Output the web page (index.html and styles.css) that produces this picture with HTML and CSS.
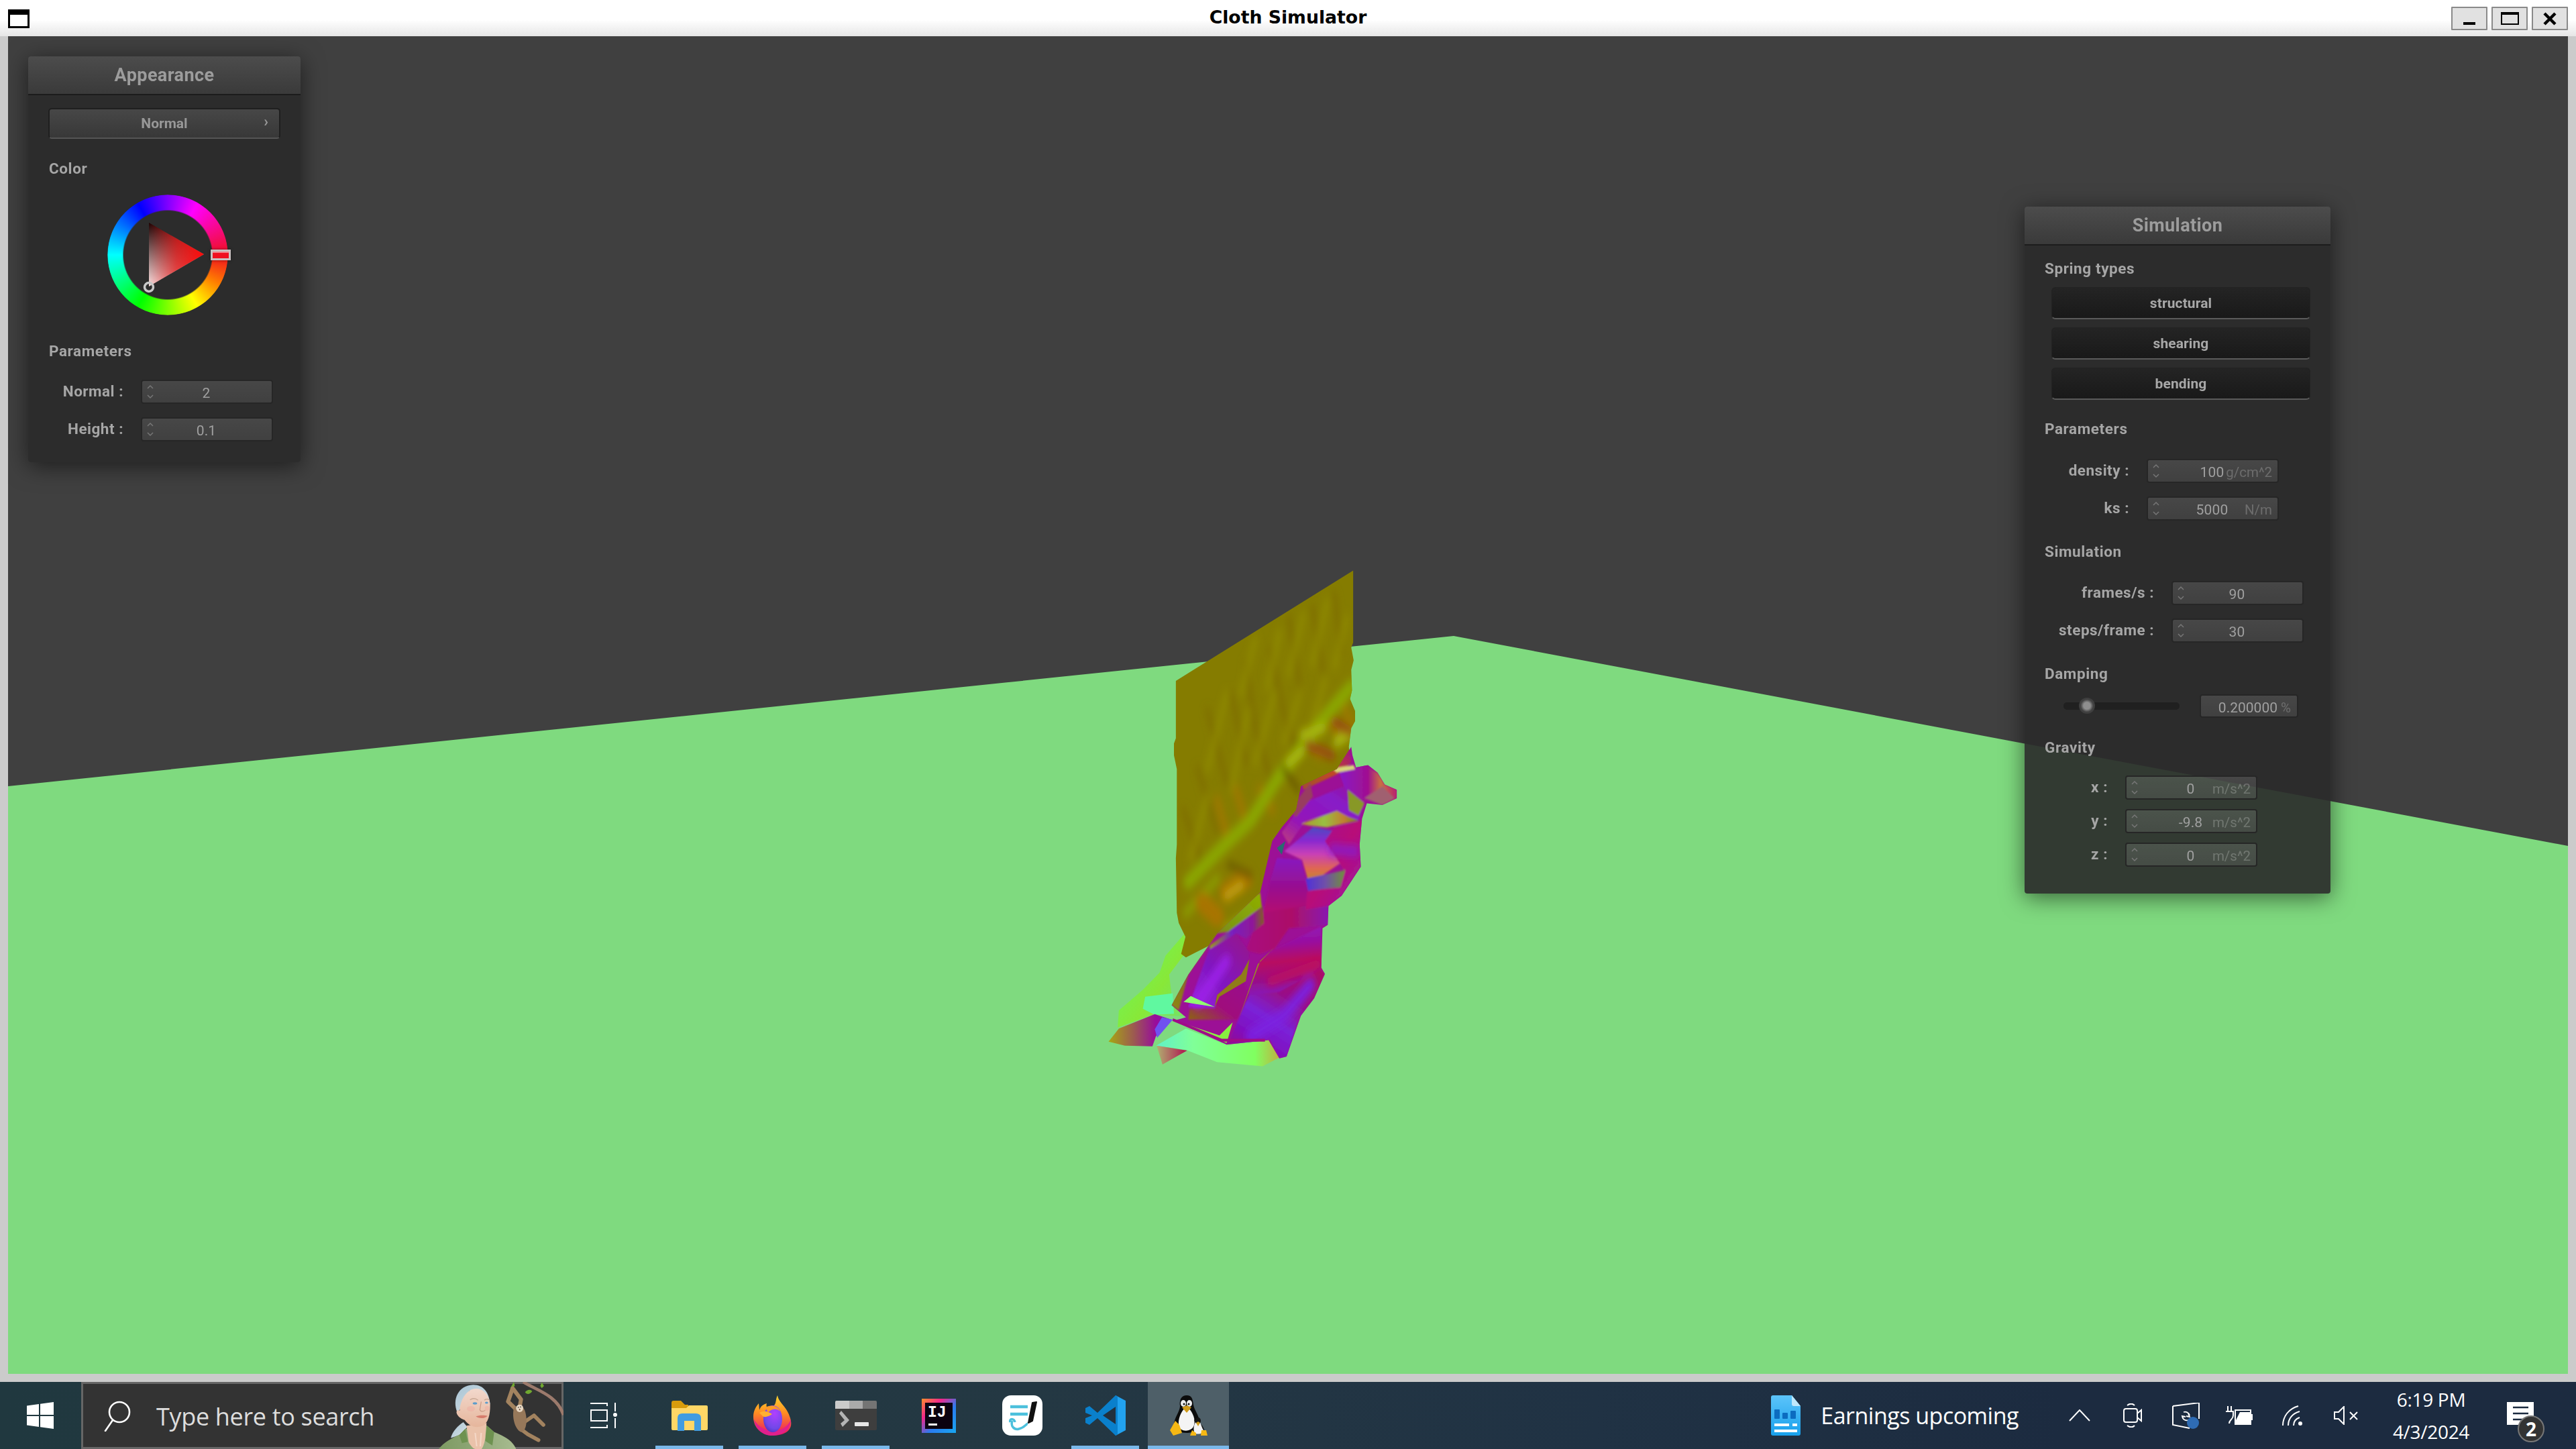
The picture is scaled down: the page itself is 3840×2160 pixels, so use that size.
FILE: index.html
```html
<!DOCTYPE html>
<html lang="en">
<head>
<meta charset="utf-8">
<title>Cloth Simulator</title>
<link rel="stylesheet" href="styles.css">
</head>
<body>
<div class="screen">
  <header class="titlebar">
    <svg class="win-icon" viewBox="0 0 32 28"><rect x="1.5" y="1.5" width="29" height="25" fill="#fff" stroke="#000" stroke-width="3"/><rect x="0" y="0" width="32" height="8" fill="#000"/></svg>
    <div class="win-title">Cloth Simulator</div>
    <div class="win-buttons">
      <div class="win-btn"><svg viewBox="0 0 54 35" width="54" height="35"><rect x="18" y="23" width="18" height="4" fill="#000"/></svg></div>
      <div class="win-btn"><svg viewBox="0 0 54 35" width="54" height="35"><rect x="15" y="9" width="25" height="17" fill="none" stroke="#000" stroke-width="2"/><rect x="14" y="8" width="27" height="4" fill="#000"/></svg></div>
      <div class="win-btn"><svg viewBox="0 0 54 35" width="54" height="35"><path d="M19 10 L35 26 M35 10 L19 26" stroke="#000" stroke-width="4.5" fill="none"/></svg></div>
    </div>
  </header>

  <main class="frame">
    <div class="viewport">
      <svg class="scene" viewBox="12 54 3816 1994" preserveAspectRatio="none">
        <defs>
          <linearGradient id="gLime" x1="0" y1="0" x2="1" y2="1"><stop offset="0" stop-color="#66fb62"/><stop offset=".6" stop-color="#88e838"/><stop offset="1" stop-color="#6fe070"/></linearGradient>
          <linearGradient id="gFoot" x1="0" y1="0" x2="1" y2="0"><stop offset="0" stop-color="#a6a812"/><stop offset=".4" stop-color="#9c5a50"/><stop offset=".75" stop-color="#980c9c"/><stop offset="1" stop-color="#8a14b0"/></linearGradient>
          <linearGradient id="gMint" x1="0" y1="0" x2="1" y2="0"><stop offset="0" stop-color="#60f0c8"/><stop offset=".3" stop-color="#80ff98"/><stop offset=".8" stop-color="#80ff60"/><stop offset="1" stop-color="#c0b040"/></linearGradient>
          <linearGradient id="gRed" x1="0" y1="0" x2="1" y2="0"><stop offset="0" stop-color="#b0b070"/><stop offset="1" stop-color="#b01050"/></linearGradient>
          <linearGradient id="gBlend" x1="0" y1="1" x2="1" y2="0"><stop offset="0" stop-color="#8c8a10"/><stop offset=".35" stop-color="#8a5c30"/><stop offset=".7" stop-color="#7e9a10"/><stop offset="1" stop-color="#90b000"/></linearGradient>
          <linearGradient id="f1" x1="0" y1="1" x2=".7" y2="0"><stop offset="0" stop-color="#a01070"/><stop offset=".3" stop-color="#8010c0"/><stop offset=".5" stop-color="#7a22d8"/><stop offset=".75" stop-color="#981088"/><stop offset="1" stop-color="#a81068"/></linearGradient>
          <linearGradient id="f2" x1="0" y1="0" x2=".1" y2="1"><stop offset="0" stop-color="#9018c0"/><stop offset=".3" stop-color="#9810a0"/><stop offset=".55" stop-color="#b81060"/><stop offset=".8" stop-color="#981088"/><stop offset="1" stop-color="#8818b8"/></linearGradient>
          <linearGradient id="f3" x1="0" y1="0" x2="0" y2="1"><stop offset="0" stop-color="#8818c0"/><stop offset=".5" stop-color="#981090"/><stop offset="1" stop-color="#b80c6c"/></linearGradient>
          <linearGradient id="f4" x1="0" y1="0" x2="1" y2="0"><stop offset="0" stop-color="#a80c80"/><stop offset=".55" stop-color="#ac1068"/><stop offset="1" stop-color="#8818b0"/></linearGradient>
          <linearGradient id="f5" x1="0" y1="1" x2="1" y2="0"><stop offset="0" stop-color="#9c20e0"/><stop offset=".45" stop-color="#8018c0"/><stop offset="1" stop-color="#981088"/></linearGradient>
          <linearGradient id="f6" x1="0" y1="1" x2="1" y2="0"><stop offset="0" stop-color="#8c6410"/><stop offset=".4" stop-color="#a0107c"/><stop offset="1" stop-color="#981090"/></linearGradient>
          <linearGradient id="f7" x1="0" y1="0" x2="1" y2="0"><stop offset="0" stop-color="#98a010"/><stop offset=".4" stop-color="#7820c0"/><stop offset=".8" stop-color="#901898"/><stop offset="1" stop-color="#806020"/></linearGradient>
          <linearGradient id="f8" x1="0" y1="0" x2="0" y2="1"><stop offset="0" stop-color="#4c4cc0"/><stop offset=".25" stop-color="#8828d0"/><stop offset=".5" stop-color="#c840b8"/><stop offset=".78" stop-color="#e06850"/><stop offset="1" stop-color="#c08830"/></linearGradient>
          <linearGradient id="f9" x1="0" y1="0" x2="1" y2="1"><stop offset="0" stop-color="#a01098"/><stop offset=".5" stop-color="#b81078"/><stop offset="1" stop-color="#9814a8"/></linearGradient>
          <linearGradient id="f10" x1="0" y1="0" x2="1" y2="0"><stop offset="0" stop-color="#5030d8"/><stop offset=".5" stop-color="#7050a8"/><stop offset="1" stop-color="#709038"/></linearGradient>
          <linearGradient id="f11" x1="0" y1="1" x2="1" y2="0"><stop offset="0" stop-color="#c04078"/><stop offset=".3" stop-color="#9414b8"/><stop offset=".7" stop-color="#881cc8"/><stop offset="1" stop-color="#981090"/></linearGradient>
          <linearGradient id="f12" x1="0" y1="0" x2="1" y2="0"><stop offset="0" stop-color="#b09030"/><stop offset=".4" stop-color="#98c040"/><stop offset=".75" stop-color="#c08030"/><stop offset="1" stop-color="#708a18"/></linearGradient>
          <linearGradient id="f13" x1="0" y1="0" x2="1" y2="0"><stop offset="0" stop-color="#8818c8"/><stop offset=".5" stop-color="#a01090"/><stop offset=".72" stop-color="#c87040"/><stop offset="1" stop-color="#b82070"/></linearGradient>
          <linearGradient id="f14" x1="0" y1="1" x2="1" y2="0"><stop offset="0" stop-color="#a05030"/><stop offset=".5" stop-color="#c04a24"/><stop offset="1" stop-color="#a01088"/></linearGradient>
          <clipPath id="clipCloth"><path d="M428 382 L1168 60 L1168 270 L1160 285 L1170 322 L1160 350 L1163 410 L1155 435 L1176 470 L1176 500 L1160 520 L1150 575 L1160 640 L1000 760 L880 880 L800 1050 L640 1130 L470 1190 L450 1180 L468 1130 L440 1090 L432 1060 L428 900 L432 860 L432 640 L420 600 L420 565 L428 550 Z"/></clipPath>
          <clipPath id="clipMass"><path id="massShape" d="M410 1330 L480 1240 L600 1120 L780 1000 L830 850 L870 810 L930 760 L950 690 L1100 640 L1160 575 L1165 600 L1180 635 L1230 628 L1270 650 L1300 685 L1350 700 L1350 725 L1290 745 L1225 740 L1205 785 L1195 860 L1200 925 L1120 1010 L1065 1040 L1062 1095 L1040 1105 L1035 1220 L1050 1238 L1005 1310 L950 1360 L890 1480 L860 1485 L815 1432 L640 1445 L420 1375 L470 1365 Z"/></clipPath>
          <filter id="soft" x="-20%" y="-20%" width="140%" height="140%"><feGaussianBlur stdDeviation="14"/></filter>
          <filter id="faint" x="-10%" y="-10%" width="120%" height="120%"><feGaussianBlur stdDeviation="3.5"/></filter>
        </defs>
        <rect x="12" y="54" width="3816" height="1994" fill="#404040"/>
        <polygon points="12,1172 2167,948 3828,1261 3828,2048 12,2048" fill="#7fda7f"/>

        <svg x="1600" y="820" width="560" height="800" viewBox="0 0 1568 1568" preserveAspectRatio="none" overflow="visible">
          <!-- pale foot pieces behind the sheets -->
          <path d="M465 1120 L470 1175 L400 1240 L415 1330 L465 1362 L330 1358 L185 1395 L190 1345 L290 1285 L360 1235 L385 1185 Z" fill="url(#gLime)"/>
          <path d="M300 1305 L415 1295 L420 1355 L340 1358 L290 1340 Z" fill="#60f8a0"/>
          <path d="M345 1448 L470 1398 L620 1440 L820 1430 L862 1482 L790 1508 L600 1496 L470 1460 Z" fill="url(#gMint)"/>
          <path d="M348 1448 L475 1462 L372 1503 Z" fill="url(#gRed)"/>
          <path d="M147 1436 L190 1398 L340 1356 L410 1372 L345 1420 L330 1450 L215 1448 Z" fill="url(#gFoot)"/>
          <path d="M340 1400 L370 1365 L415 1372 L350 1425 Z" fill="#7050f0"/>

          <!-- hanging upper sheet -->
          <g clip-path="url(#clipCloth)">
            <rect x="400" y="40" width="800" height="1200" fill="#857c00"/>
            <g filter="url(#soft)" fill="none" stroke-linecap="round">
              <g stroke-width="24" stroke="#7c6800" opacity=".55">
                <path d="M720 330 L760 520 M820 290 L880 480 M900 200 L950 420 M1000 170 L1040 350 M1090 130 L1120 300"/>
                <path d="M560 470 L640 680 M660 420 L720 620 M760 520 L820 660 M880 480 L930 590 M520 640 L600 820 M460 760 L540 920"/>
              </g>
              <g stroke-width="24" stroke="#939000" opacity=".6">
                <path d="M760 260 L700 420 M860 240 L810 400 M960 190 L900 360 M1060 150 L1000 330 M1140 200 L1090 340"/>
                <path d="M640 420 L560 640 M730 470 L660 700 M840 420 L760 620 M950 410 L880 560 M1050 380 L1000 500 M560 720 L490 900"/>
              </g>
              <path d="M680 700 L720 800 M600 730 L650 860 M780 700 L830 760 M960 560 L1030 600 M1040 480 L1110 540 M1120 440 L1160 510" stroke="#a07800" stroke-width="30" opacity=".8"/>
              <path d="M480 970 L620 870 L740 790 L860 660 L940 590 L1060 480 L1160 400" stroke="#8aa600" stroke-width="42"/>
              <path d="M470 1060 L600 960" stroke="#8a9800" stroke-width="30"/>
              <path d="M900 620 L950 590 M960 540 L1040 520 M1100 560 L1150 540" stroke="#a8b810" stroke-width="30"/>
              <path d="M980 570 L1080 600 M1090 500 L1150 530" stroke="#9a4a10" stroke-width="28"/>
              <path d="M540 1030 L600 1070 M640 1000 L720 960" stroke="#a87400" stroke-width="60"/>
              <path d="M650 920 L740 950 M880 640 L940 700" stroke="#6b5a00" stroke-width="20"/>
              <path d="M640 1010 L700 980" stroke="#c0a010" stroke-width="26"/>
              <path d="M640 1110 L780 1040" stroke="#98b000" stroke-width="24"/>
            </g>
          </g>

          <!-- tumbled lower sheet -->
          <use href="#massShape" fill="#9c1096"/>
          <g clip-path="url(#clipMass)">
            <g filter="url(#faint)">
              <path d="M400 1245 L580 1095 L640 1055 L780 1000 L795 1100 L600 1120 L480 1240 L440 1345 L410 1330 Z" fill="url(#gBlend)"/>
              <polygon points="640,1445 820,1430 860,1485 890,1480 940,1370 1005,1310 1050,1238 1030,1225 860,1290 730,1300 690,1370" fill="url(#f1)"/>
              <polygon points="730,1300 780,1200 840,1165 1035,1100 1035,1225 860,1290" fill="url(#f2)"/>
              <polygon points="790,1070 820,970 850,900 950,905 985,1010 965,1050" fill="url(#f3)"/>
              <polygon points="780,1060 965,1040 1065,1035 1062,1095 900,1105 840,1165 780,1180 720,1170" fill="url(#f4)"/>
              <polygon points="480,1335 570,1160 680,1120 735,1175 720,1250 600,1300 592,1338" fill="url(#f5)"/>
              <polygon points="480,1372 486,1340 592,1338 600,1300 700,1240 735,1300 685,1372" fill="url(#f6)"/>
              <polygon points="570,1155 790,1040 795,1090 720,1135 680,1120 570,1165" fill="url(#f7)"/>
              <polygon points="880,880 1000,810 1080,820 1060,845 1135,905 1040,950 980,965 955,905" fill="url(#f8)"/>
              <polygon points="1050,850 1090,810 1205,790 1195,860 1200,925 1120,1010 1065,1040 970,1050 975,1000 1130,935" fill="url(#f9)"/>
              <polygon points="970,960 1135,935 1115,985 980,995" fill="url(#f10)"/>
              <polygon points="870,825 960,740 1130,690 1215,740 1190,790 1080,770 970,790 900,860" fill="url(#f11)"/>
              <polygon points="950,800 1100,762 1150,780 1190,790 1060,810 985,805" fill="url(#f12)"/>
              <polygon points="1110,650 1210,628 1270,650 1300,685 1350,700 1350,725 1290,745 1220,725 1190,770 1130,690" fill="url(#f13)"/>
              <polygon points="950,660 1060,620 1150,575 1160,620 1100,655 960,700" fill="url(#f14)"/>
              <polygon points="1080,638 1170,628 1176,640 1100,650" fill="#d8d878"/>
              <polygon points="1215,725 1290,690 1340,725 1290,745" fill="#a06070"/>
              <polygon points="1145,700 1215,740 1190,775 1150,760" fill="#889828"/>
              <polygon points="900,760 990,680 1000,720 930,780" fill="#983c60"/>
            </g>
            <g filter="url(#soft)" fill="none" stroke-linecap="round">
              <path d="M820 1260 L1020 1210" stroke="#c0105c" stroke-width="26"/>
              <path d="M740 1420 L880 1360 L990 1270" stroke="#7c20e0" stroke-width="40"/>
              <path d="M520 1320 L640 1200" stroke="#9c24e8" stroke-width="34"/>
              <path d="M1080 875 L1180 880" stroke="#8a1ac8" stroke-width="30"/>
            </g>
            <path d="M460 1320 L490 1303 L590 1335 L500 1325 Z" fill="#90ff70"/>
            <path d="M850 870 L885 850 L870 890 Z" fill="#2a6a70"/>
            <path d="M590 1335 L600 1300 L700 1240 L735 1195 L720 1260 L610 1305 Z" fill="#907c18"/>
            <path d="M690 1370 L730 1295 L780 1200 L840 1160 L770 1210 L720 1310 Z" fill="#98981a"/>
          </g>
          <path d="M425 1375 L640 1440 L665 1380 L610 1418 Z" fill="#88f040"/>
          <path d="M415 1372 L620 1432 L800 1432" stroke="#a00c88" stroke-width="8" fill="none"/>
        </svg>
      </svg>

      <section class="panel panel-appearance">
        <h2 class="panel-title">Appearance</h2>
        <div class="dropdown"><span class="dropdown-text">Normal</span><span class="dropdown-arrow">›</span></div>
        <h3 class="group group-color">Color</h3>
        <div class="wheel">
          <div class="hue-ring"></div>
          <svg class="wheel-tri" viewBox="0 0 180 180" width="180" height="180">
            <defs>
              <linearGradient id="triA" x1="0" y1="0" x2="1" y2="0"><stop offset="0" stop-color="#f01010" stop-opacity=".12"/><stop offset=".5" stop-color="#f01010" stop-opacity=".72"/><stop offset="1" stop-color="#ff0a0a"/></linearGradient>
              <linearGradient id="triB" x1="0" y1="0" x2="0" y2="1"><stop offset="0" stop-color="#000"/><stop offset="1" stop-color="#fff"/></linearGradient>
            </defs>
            <polygon points="62,42 144,89 62,137" fill="url(#triB)"/>
            <polygon points="62,42 144,89 62,137" fill="url(#triA)"/>
            <circle cx="62" cy="138" r="6.5" fill="none" stroke="#c8c8c8" stroke-width="3.5"/>
          </svg>
          <span class="wheel-marker"></span>
        </div>
        <h3 class="group group-params">Parameters</h3>
        <div class="rows rows-appearance">
          <div class="row"><span class="label label-a">Normal :</span><div class="field"><svg class="spin" viewBox="0 0 12 24"><path d="M2 7 L6 3 L10 7 M2 17 L6 21 L10 17" fill="none" stroke="#777" stroke-width="1.5"/></svg><span class="value">2</span></div></div>
          <div class="row"><span class="label label-a">Height :</span><div class="field"><svg class="spin" viewBox="0 0 12 24"><path d="M2 7 L6 3 L10 7 M2 17 L6 21 L10 17" fill="none" stroke="#777" stroke-width="1.5"/></svg><span class="value">0.1</span></div></div>
        </div>
      </section>

      <section class="panel panel-sim">
        <h2 class="panel-title">Simulation</h2>
        <h3 class="group group-first">Spring types</h3>
        <div class="toggles">
          <button class="toggle">structural</button>
          <button class="toggle">shearing</button>
          <button class="toggle">bending</button>
        </div>
        <h3 class="group group-p2">Parameters</h3>
        <div class="rows rows-p">
          <div class="row row-p"><span class="label label-b">density :</span><div class="field"><svg class="spin" viewBox="0 0 12 24"><path d="M2 7 L6 3 L10 7 M2 17 L6 21 L10 17" fill="none" stroke="#777" stroke-width="1.5"/></svg><span class="value">100</span><span class="unit">g/cm^2</span></div></div>
          <div class="row row-p"><span class="label label-b">ks :</span><div class="field"><svg class="spin" viewBox="0 0 12 24"><path d="M2 7 L6 3 L10 7 M2 17 L6 21 L10 17" fill="none" stroke="#777" stroke-width="1.5"/></svg><span class="value">5000</span><span class="unit">N/m</span></div></div>
        </div>
        <h3 class="group group-s">Simulation</h3>
        <div class="rows rows-s">
          <div class="row row-s"><span class="label label-c">frames/s :</span><div class="field"><svg class="spin" viewBox="0 0 12 24"><path d="M2 7 L6 3 L10 7 M2 17 L6 21 L10 17" fill="none" stroke="#777" stroke-width="1.5"/></svg><span class="value">90</span></div></div>
          <div class="row row-s"><span class="label label-c">steps/frame :</span><div class="field"><svg class="spin" viewBox="0 0 12 24"><path d="M2 7 L6 3 L10 7 M2 17 L6 21 L10 17" fill="none" stroke="#777" stroke-width="1.5"/></svg><span class="value">30</span></div></div>
        </div>
        <h3 class="group group-d">Damping</h3>
        <div class="damping">
          <div class="track"><span class="knob"></span></div>
          <div class="field field-damp"><span class="damp-value">0.200000</span><span class="unit">%</span></div>
        </div>
        <h3 class="group group-g">Gravity</h3>
        <div class="rows rows-g">
          <div class="row row-g"><span class="label label-d">x :</span><div class="field"><svg class="spin" viewBox="0 0 12 24"><path d="M2 7 L6 3 L10 7 M2 17 L6 21 L10 17" fill="none" stroke="#777" stroke-width="1.5"/></svg><span class="value">0</span><span class="unit">m/s^2</span></div></div>
          <div class="row row-g"><span class="label label-d">y :</span><div class="field"><svg class="spin" viewBox="0 0 12 24"><path d="M2 7 L6 3 L10 7 M2 17 L6 21 L10 17" fill="none" stroke="#777" stroke-width="1.5"/></svg><span class="value">-9.8</span><span class="unit">m/s^2</span></div></div>
          <div class="row row-g"><span class="label label-d">z :</span><div class="field"><svg class="spin" viewBox="0 0 12 24"><path d="M2 7 L6 3 L10 7 M2 17 L6 21 L10 17" fill="none" stroke="#777" stroke-width="1.5"/></svg><span class="value">0</span><span class="unit">m/s^2</span></div></div>
        </div>
      </section>
    </div>
  </main>

  <footer class="taskbar">
    <div class="start">
      <svg viewBox="0 0 40 40" width="40" height="40"><path d="M0 5.5 L18 3 V19 H0 Z M20 2.7 L40 0 V19 H20 Z M0 21 H18 V37 L0 34.5 Z M20 21 H40 V40 L20 37.3 Z" fill="#fff"/></svg>
    </div>
    <div class="search">
      <svg class="search-icon" viewBox="0 0 40 46" width="40" height="46"><circle cx="23" cy="17" r="15" fill="none" stroke="#fff" stroke-width="2.6"/><path d="M13 29 L2 45" stroke="#fff" stroke-width="2.6" stroke-linecap="round"/></svg>
      <span class="search-text">Type here to search</span>
      <svg class="search-art" viewBox="0 12 600 300" width="200" height="100">
        <defs>
          <linearGradient id="shirt" x1="0" y1="0" x2="1" y2="0"><stop offset="0" stop-color="#7d9a62"/><stop offset=".5" stop-color="#90a878"/><stop offset="1" stop-color="#a8bc90"/></linearGradient>
          <linearGradient id="hair" x1="0" y1="0" x2="1" y2="1"><stop offset="0" stop-color="#a8c4d4"/><stop offset="1" stop-color="#d8e2e6"/></linearGradient>
          <linearGradient id="skin" x1="0" y1="0" x2="0" y2="1"><stop offset="0" stop-color="#f2d8cc"/><stop offset="1" stop-color="#e6b69c"/></linearGradient>
        </defs>
        <path d="M96 262 C104 232 128 208 152 192 L170 214 L134 250 L100 262 Z" fill="url(#hair)"/>
        <path d="M42 312 C64 282 104 262 138 246 L162 222 L256 206 L290 236 C330 252 372 272 388 312 Z" fill="url(#shirt)"/>
        <path d="M134 250 L160 222 L172 280 L146 286 Z M256 206 L290 236 L282 296 L250 276 Z" fill="#6e9250"/>
        <path d="M166 208 L176 282 C186 300 198 312 206 312 L234 312 C244 296 248 280 250 262 L256 196 Z" fill="#eac2aa"/>
        <path d="M205 240 L212 300 M232 240 L228 300" stroke="#f4d8c8" stroke-width="6" fill="none"/>
        <path d="M126 150 C100 90 130 28 196 25 C244 25 268 62 272 112 L256 120 L180 50 L140 130 Z" fill="url(#hair)"/>
        <path d="M136 140 C138 90 170 40 212 42 C248 44 270 80 272 116 C272 160 264 192 240 208 C208 222 176 208 158 182 C134 176 112 150 126 138 Z" fill="url(#skin)"/>
        <ellipse cx="186" cy="132" rx="18" ry="12" fill="#eeb0a4" opacity=".6"/>
        <ellipse cx="258" cy="130" rx="10" ry="11" fill="#eeb0a4" opacity=".6"/>
        <path d="M182 92 C194 84 208 86 218 94 M246 94 C252 88 262 88 268 92" stroke="#c9a894" stroke-width="4" fill="none"/>
        <ellipse cx="204" cy="108" rx="10" ry="5" fill="#5b9ccc"/>
        <ellipse cx="256" cy="105" rx="7" ry="4.5" fill="#5b9ccc"/>
        <path d="M232 100 L226 136 C228 146 244 146 250 138" stroke="#c99a84" stroke-width="3.5" fill="none"/>
        <path d="M208 166 C222 160 246 160 260 164 C250 176 222 178 208 166 Z" fill="#d67c6c"/>
        <path d="M420 12 C480 50 570 70 600 160" stroke="#9c7a6c" stroke-width="14" fill="none"/>
        <path d="M428 58 C438 46 452 44 460 54 C450 68 436 70 428 58 Z M503 14 L513 30 L503 40 L496 30 Z M378 12 L382 28 L368 52 L362 40 Z" fill="#70a830"/>
        <g fill="none" stroke="#a3835f" stroke-linecap="round" stroke-linejoin="round">
          <path d="M372 42 L352 100 L385 132" stroke-width="18"/>
          <path d="M374 42 L410 90 L404 124" stroke-width="18"/>
          <path d="M424 192 L468 162 L510 204" stroke-width="17"/>
          <path d="M408 222 L440 246 L488 272" stroke-width="17"/>
        </g>
        <path d="M378 130 C396 108 424 118 430 150 C440 190 432 236 410 236 C384 226 368 170 378 130 Z" fill="#97785a"/>
        <ellipse cx="404" cy="130" rx="16" ry="17" fill="#e8d8c4"/>
        <circle cx="398" cy="126" r="2.5" fill="#222"/><circle cx="408" cy="124" r="2.5" fill="#222"/><circle cx="404" cy="136" r="3" fill="#5a3c2c"/>
      </svg>
    </div>
    <div class="taskview">
      <svg viewBox="0 0 40 38" width="40" height="38"><path d="M0 1 H25 V5 M0 37 H25 V33 M1 11 H25 V27 H1 Z M37 0 V13 M37 23 V38" fill="none" stroke="#fff" stroke-width="2"/><circle cx="37" cy="18" r="3" fill="#fff"/></svg>
    </div>
    <div class="apps">
      <div class="app app-open">
        <svg viewBox="0 0 54 46" width="54" height="46"><path d="M0 4 Q0 1 3 1 H14 L20 7 H25 V14 H0 Z" fill="#d89c0c"/><path d="M0 12 L22 12 L26 8 H52 Q54 8 54 10 V43 Q54 45 52 45 H2 Q0 45 0 43 Z" fill="#ffd766"/><path d="M9 46 V27 Q9 20 16 20 H36 Q44 20 44 27 V46 H34 V31 H19 V46 Z" fill="#429ce0"/></svg>
      </div>
      <div class="app app-open">
        <svg viewBox="0 0 58 60" width="58" height="60">
          <defs>
            <linearGradient id="fxA" x1="0" y1="0" x2="0" y2="1"><stop offset="0" stop-color="#ffd52e"/><stop offset=".45" stop-color="#ff8a22"/><stop offset="1" stop-color="#e8106a"/></linearGradient>
            <radialGradient id="fxB" cx=".6" cy=".3" r=".8"><stop offset="0" stop-color="#b040ff"/><stop offset=".7" stop-color="#7048e8"/><stop offset="1" stop-color="#4a2eb8"/></radialGradient>
          </defs>
          <path d="M36 0 C38 12 50 16 55 34 C62 56 40 60 29 60 C12 60 0 48 0 32 C0 24 3 18 8 12 L9 22 C11 16 14 14 20 12 C18 18 22 20 26 18 C36 14 32 8 36 0 Z" fill="url(#fxA)"/>
          <path d="M28 60 C44 60 56 50 56 36 C50 50 36 56 22 52 C12 50 4 42 1 36 C3 50 14 60 28 60 Z" fill="#e0208c"/>
          <ellipse cx="29" cy="35" rx="14" ry="20" fill="url(#fxB)"/>
          <path d="M9 26 C16 22 22 24 28 28 C22 32 16 34 13 30 Z" fill="#ffb030"/>
          <path d="M18 18 C24 14 36 14 40 24 C34 18 26 20 22 26 Z" fill="#ff9a28"/>
        </svg>
      </div>
      <div class="app app-open">
        <svg viewBox="0 0 62 44" width="62" height="44"><rect x="0" y="0" width="62" height="44" rx="2" fill="#3e3e3e"/><path d="M0 2 Q0 0 2 0 H21 V12 H0 Z" fill="#cbcbcb"/><rect x="21" y="0" width="20" height="12" fill="#aaa"/><path d="M41 0 H60 Q62 0 62 2 V12 H41 Z" fill="#747474"/><path d="M9 15 L21 29 L11 39 L8 34 L14 29 L6 19 Z" fill="#b4b4b4"/><rect x="29" y="32" width="21" height="6" rx="1" fill="#e6e6e6"/></svg>
      </div>
      <div class="app">
        <svg viewBox="0 0 51 51" width="51" height="51">
          <defs><linearGradient id="ij" x1="0" y1="0" x2="1" y2="1"><stop offset="0" stop-color="#ff8f2a"/><stop offset=".3" stop-color="#f0268c"/><stop offset=".6" stop-color="#2a7cf0"/><stop offset="1" stop-color="#18a8f0"/></linearGradient></defs>
          <rect width="51" height="51" fill="url(#ij)"/><rect x="5" y="6" width="41" height="39" fill="#0b0210"/>
          <text x="9" y="27" class="ij-text">IJ</text><rect x="10" y="37" width="13" height="3" fill="#fff"/>
        </svg>
      </div>
      <div class="app">
        <svg viewBox="0 0 60 60" width="60" height="60"><rect width="60" height="60" rx="13" fill="#fff"/><path d="M12 17 H38 M12 28 H38" stroke="#4cc0dc" stroke-width="4.5"/><path d="M45 11 L51 10 L45 38 L39 41 Z" fill="#111" stroke="#111" stroke-width="2" stroke-linejoin="round"/><path d="M15 38 C12 46 18 52 25 50 C33 48 37 42 38 42 M12 40 C10 34 18 34 19 40" fill="none" stroke="#4cc0dc" stroke-width="3.5"/></svg>
      </div>
      <div class="app app-open">
        <svg viewBox="0 0 60 60" width="60" height="60"><path d="M45 0 L60 8 V52 L45 60 Z" fill="#22a2ef"/><path d="M45 0 L18 26 L6 16 L0 19 V26 L10 30 L0 34 V41 L6 44 L18 34 L45 60 L48 58 V2 Z" fill="#0a80cc"/><path d="M45 17 V43 L26 30 Z" fill="#22303e"/></svg>
      </div>
      <div class="app app-active">
        <svg viewBox="0 0 56 60" width="56" height="60"><path d="M25 0 C16 0 14 8 15 16 C15 24 6 34 6 44 C6 52 12 56 26 56 C36 56 44 50 44 40 C44 30 36 22 35 14 C34 6 33 0 25 0 Z" fill="#0c0c0c"/><path d="M25 18 C18 20 12 34 13 44 C14 52 22 54 28 52 C36 50 38 42 36 34 C34 26 30 20 25 18 Z" fill="#f4f4f4"/><ellipse cx="20" cy="12" rx="4" ry="5" fill="#eee"/><ellipse cx="29" cy="12" rx="4" ry="5" fill="#eee"/><circle cx="21" cy="13" r="1.5" fill="#111"/><circle cx="28" cy="13" r="1.5" fill="#111"/><path d="M18 18 L25 15 L32 18 L25 26 Z" fill="#d09a18"/><path d="M8 38 L14 44 L18 56 L5 60 L0 52 Z" fill="#f6b814"/><path d="M36 36 C44 38 50 46 52 54 L40 56 Z" fill="#141414"/><path d="M42 38 C46 38 46 46 50 52 C52 58 36 60 36 54 C34 46 38 38 42 38 Z" fill="#f4f4f4"/><ellipse cx="42" cy="38" rx="4" ry="5" fill="#141414"/><path d="M39 41 L42 39 L45 41 L42 46 Z" fill="#d09a18"/><path d="M30 60 L33 52 L39 56 L39 60 Z M46 60 L47 52 L54 52 L56 60 Z" fill="#f6b814"/></svg>
      </div>
    </div>
    <div class="tray">
      <div class="news">
        <svg viewBox="0 0 44 60" width="44" height="60"><defs><linearGradient id="news" x1="0" y1="0" x2="0" y2="1"><stop offset="0" stop-color="#5cc4fa"/><stop offset="1" stop-color="#18a0ec"/></linearGradient></defs><path d="M3 0 H31 L44 16 V57 Q44 60 41 60 H3 Q0 60 0 57 V3 Q0 0 3 0 Z" fill="url(#news)"/><path d="M31 0 L44 16 H34 Q31 16 31 13 Z" fill="#bfe8fb"/><rect x="5" y="21" width="8" height="14" rx="1" fill="#0c6cc0"/><rect x="17" y="26" width="8" height="9" rx="1" fill="#0c6cc0"/><rect x="29" y="23" width="8" height="12" rx="1" fill="#0c6cc0"/><rect x="5" y="42" width="22" height="4" fill="#fff"/><rect x="32" y="42" width="7" height="4" fill="#fff"/><rect x="5" y="51" width="34" height="4" fill="#fff"/></svg>
        <span class="news-text">Earnings upcoming</span>
      </div>
      <div class="tray-icons">
        <div class="tray-cell"><svg viewBox="0 0 32 18" width="32" height="18"><path d="M1 17 L16 1 L31 17" fill="none" stroke="#fff" stroke-width="2"/></svg></div>
        <div class="tray-cell"><svg viewBox="0 0 28 36" width="28" height="36"><path d="M6 3 C10 0 14 0 17 3 M6 33 C10 36 14 36 17 33" fill="none" stroke="#fff" stroke-width="2"/><rect x="1" y="8" width="20" height="20" rx="3" fill="none" stroke="#fff" stroke-width="2"/><path d="M21 15 L27 10 V26 L21 21" fill="none" stroke="#fff" stroke-width="2"/></svg></div>
        <div class="tray-cell"><svg viewBox="0 0 42 39" width="42" height="39"><path d="M1 5 L40 0 V24 M1 5 V33 L26 38" fill="none" stroke="#fff" stroke-width="2"/><path d="M17 14 A7 7 0 0 1 26 19 M24 16 L26 21 L21 20 M24 26 A7 7 0 0 1 15 21 M17 25 L15 20 L20 21" fill="none" stroke="#fff" stroke-width="1.8"/><circle cx="31" cy="30" r="9" fill="#2f6cb4"/></svg></div>
        <div class="tray-cell"><svg viewBox="0 0 40 28" width="40" height="28"><path d="M3 0 V8 M8 0 V8 M0 8 H11 V14 C11 20 5 20 5 26" fill="none" stroke="#fff" stroke-width="2"/><rect x="14" y="6" width="23" height="21" fill="none" stroke="#fff" stroke-width="2"/><rect x="37" y="12" width="3" height="9" fill="#fff"/><path d="M14 23 L21 9 H36 V26 H14 Z" fill="#fff"/></svg></div>
        <div class="tray-cell"><svg viewBox="0 0 32 30" width="32" height="30"><path d="M1 30 C1 16 10 5 24 1 M9 30 C9 20 15 12 26 9 M17 30 C17 24 20 20 26 18" fill="none" stroke="#fff" stroke-width="2"/><circle cx="27" cy="27" r="3" fill="#fff"/></svg></div>
        <div class="tray-cell"><svg viewBox="0 0 37 28" width="37" height="28"><path d="M1 9 H7 L15 1 V27 L7 19 H1 Z" fill="none" stroke="#fff" stroke-width="2"/><path d="M24 9 L35 20 M35 9 L24 20" stroke="#fff" stroke-width="2"/></svg></div>
      </div>
      <div class="clock"><span>6:19 PM</span><span>4/3/2024</span></div>
      <div class="notify">
        <svg viewBox="0 0 40 34" width="40" height="34"><rect width="40" height="34" fill="#fff"/><path d="M9 8 H32 M9 17 H32 M9 26 H24" stroke="#1c2b40" stroke-width="2.5"/></svg>
        <span class="badge">2</span>
      </div>
    </div>
  </footer>
</div>
</body>
</html>
```

FILE: styles.css
```css
* { box-sizing: border-box; }
html, body { margin: 0; padding: 0; width: 3840px; height: 2160px; overflow: hidden; background: #000; }
.screen { width: 3840px; height: 2160px; display: flex; flex-direction: column; }

/* window chrome */
.titlebar { height: 54px; flex: none; display: flex; align-items: flex-start; justify-content: space-between; background: linear-gradient(#fff 0, #fff 55%, #e6e6e6 100%); padding: 14px 12px 0 12px; position: relative; }
.win-icon { width: 32px; height: 28px; display: block; }
.win-title { font: 700 26.7px/26px "DejaVu Sans", sans-serif; color: #000; position: absolute; left: 0; right: 0; top: 13px; text-align: center; }
.win-buttons { display: flex; gap: 6px; margin-top: -4px; }
.win-btn { width: 54px; height: 35px; background: #e1e1e1; border: 2px solid #8a8a8a; border-radius: 1px; display: flex; align-items: center; justify-content: center; }
.win-btn svg { flex: none; }

.frame { flex: 1; background: #cbcbcb; padding: 0 12px 12px 12px; min-height: 0; display: flex; }
.viewport { flex: 1; position: relative; overflow: hidden; }
.scene { position: absolute; inset: 0; width: 100%; height: 100%; display: block; }

/* floating nanogui windows */
.panel { position: absolute; background: rgba(43, 43, 43, .915); border-radius: 4px; box-shadow: 0 6px 34px rgba(0, 0, 0, .55); font-family: Roboto, sans-serif; filter: blur(.7px); color: #a8a8a8; }
.panel-appearance { left: 30px; top: 30px; width: 406px; height: 605px; }
.panel-sim { left: 3006px; top: 254px; width: 456px; height: 1024px; }
.panel-title { margin: 0; height: 58px; font: 700 27px/56px Roboto, sans-serif; text-align: center; color: #9c9c9c; background: linear-gradient(#4c4c4c, #3a3a3a); border-bottom: 2px solid #1c1c1c; border-radius: 4px 4px 0 0; letter-spacing: .4px; }
.group { margin: 0; font: 700 22.5px/28px Roboto, sans-serif; color: #a6a6a6; letter-spacing: .6px; padding-left: 31px; }
.panel-sim .group { padding-left: 30px; }

.dropdown { margin: 19px 0 0 30px; width: 346px; height: 46px; border: 2px solid #1f1f1f; border-bottom-color: #555; border-radius: 5px; background: linear-gradient(#474747, #383838); display: grid; grid-template-columns: 1fr auto 1fr; align-items: center; font: 700 21px/1 Roboto, sans-serif; color: #989898; }
.dropdown-text { grid-column: 2; }
.dropdown-arrow { grid-column: 3; justify-self: end; margin: -6px 16px 0 0; font-size: 22px; }
.group-color { margin-top: 30px; }
.wheel { position: relative; width: 180px; height: 180px; margin: 25px 0 0 118px; }
.hue-ring { width: 180px; height: 180px; border-radius: 50%; background: conic-gradient(from 90deg, #f01020, #ff8000 30deg, #ffff00 60deg, #00ff00 120deg, #00ffff 180deg, #0000ff 240deg, #ff00ff 300deg, #f01020 360deg); -webkit-mask: radial-gradient(circle, transparent 65.5px, #000 67.5px, #000 89px, transparent 90.5px); mask: radial-gradient(circle, transparent 65.5px, #000 67.5px, #000 89px, transparent 90.5px); }
.wheel-tri { position: absolute; left: 0; top: 0; display: block; }
.wheel-marker { position: absolute; left: 154px; top: 82px; width: 30px; height: 16px; background: #f01020; border: 3px solid #c9c0c0; box-shadow: inset 0 2px 0 #f08088, 0 0 4px rgba(0,0,0,.5); }
.group-params { margin-top: 39px; }

.rows { display: flex; flex-direction: column; }
.rows-appearance { margin-top: 29px; gap: 20px; }
.row { display: flex; align-items: center; gap: 26px; }
.label { font: 700 22.5px/36px Roboto, sans-serif; color: #a6a6a6; text-align: right; flex: none; letter-spacing: .5px; margin-top: -3px; }
.label-a { width: 142px; }
.label-b { width: 156px; }
.label-c { width: 193px; }
.label-d { width: 124px; }
.field { width: 197px; height: 36px; flex: none; border: 2px solid #262626; border-radius: 4px; background: linear-gradient(rgba(255,255,255,.125), rgba(255,255,255,.095)); display: grid; grid-template-columns: 1fr auto 1fr; align-items: center; font: 400 21px/26px Roboto, sans-serif; color: #a0a0a0; padding: 0 8px 0 6px; }
.spin { width: 12px; height: 28px; grid-column: 1; justify-self: start; }
.value { grid-column: 2; letter-spacing: .2px; padding-top: 4px; }
.unit { grid-column: 3; justify-self: end; color: rgba(255,255,255,.22); font-size: 20.5px; padding-top: 4px; }

.group-first { margin-top: 20px; }
.toggles { display: flex; flex-direction: column; gap: 12px; margin: 14px 0 0 40px; width: 386px; }
.toggle { height: 48px; padding: 0; border: 1px solid #222; border-bottom: 2px solid #5a5a5a; border-radius: 6px; background: linear-gradient(#242424, #191919); color: #a8a8a8; font: 700 21px/44px Roboto, sans-serif; letter-spacing: .1px; }
.group-p2 { margin-top: 29px; }
.rows-p { margin-top: 31px; gap: 20px; }
.group-s { margin-top: 32px; }
.rows-s { margin-top: 30px; gap: 20px; }
.group-d { margin-top: 32px; }
.damping { display: flex; align-items: center; margin: 17px 0 0 58px; }
.track { width: 173px; height: 11px; border-radius: 5px; background: #202020; position: relative; flex: none; }
.knob { position: absolute; left: 23px; top: -7px; width: 24px; height: 24px; border-radius: 50%; background: radial-gradient(circle, #8e8e8e 0, #8e8e8e 30%, #424242 55%, #333 100%); }
.field-damp { width: 147px; height: 35px; margin-left: 30px; display: flex; justify-content: flex-end; align-items: center; gap: 5px; padding: 0 9px 0 0; }
.damp-value { padding-top: 4px; }
.group-g { margin-top: 30px; }
.rows-g { margin-top: 28px; gap: 14px; }

/* taskbar */
.taskbar { height: 100px; flex: none; display: flex; align-items: stretch; background: linear-gradient(90deg, #20383f 0, #243843 40%, #203244 62%, #1c2b40 80%, #1c2b40 100%); color: #fff; }
.start { width: 121px; flex: none; display: flex; align-items: center; justify-content: center; }
.start svg { margin-right: 2px; }
.search { width: 719px; flex: none; display: flex; align-items: center; background: #333; box-shadow: inset 0 0 0 3px #666; overflow: hidden; }
.search-icon { margin-left: 34px; flex: none; margin-top: 1px; }
.search-text { margin-left: 38px; font: 400 36px/1 "Open Sans", sans-serif; color: #ddd; letter-spacing: -.33px; white-space: nowrap; padding-top: 3px; }
.search-art { margin-left: auto; flex: none; display: block; }
.taskview { width: 120px; margin-right: 7px; flex: none; display: flex; align-items: center; justify-content: center; }
.apps { display: flex; gap: 3px; flex: none; }
.app { width: 121px; flex: none; display: flex; align-items: center; justify-content: center; position: relative; }
.app-open::after, .app-active::after { content: ""; position: absolute; bottom: 0; height: 5px; width: 101px; background: #7ab8ea; }
.app-active { background: #4e5f68; }
.app-active::after { width: 100%; }
.ij-text { font: 700 23px "Liberation Mono", monospace; fill: #fff; }
.tray { margin-left: auto; display: flex; align-items: center; flex: none; }
.news { display: flex; align-items: center; gap: 30px; margin-right: 51px; }
.news-text { font: 400 34px/1 "Open Sans", sans-serif; letter-spacing: -.5px; white-space: nowrap; }
.tray-icons { display: flex; }
.tray-cell { width: 79.5px; flex: none; display: flex; align-items: center; justify-content: center; }
.clock { width: 170px; flex: none; display: flex; flex-direction: column; align-items: center; gap: 18px; padding-left: 4px; font: 400 28px/30px "Open Sans", sans-serif; letter-spacing: -.3px; }
.notify { width: 100px; margin-right: 33px; flex: none; display: flex; justify-content: center; position: relative; margin-top: -6px; }
.badge { position: absolute; left: 46px; top: 20px; width: 40px; height: 40px; border-radius: 50%; background: #333; border: 2px solid #777; font: 700 28px/36px "Open Sans", sans-serif; text-align: center; color: #fff; }
```
